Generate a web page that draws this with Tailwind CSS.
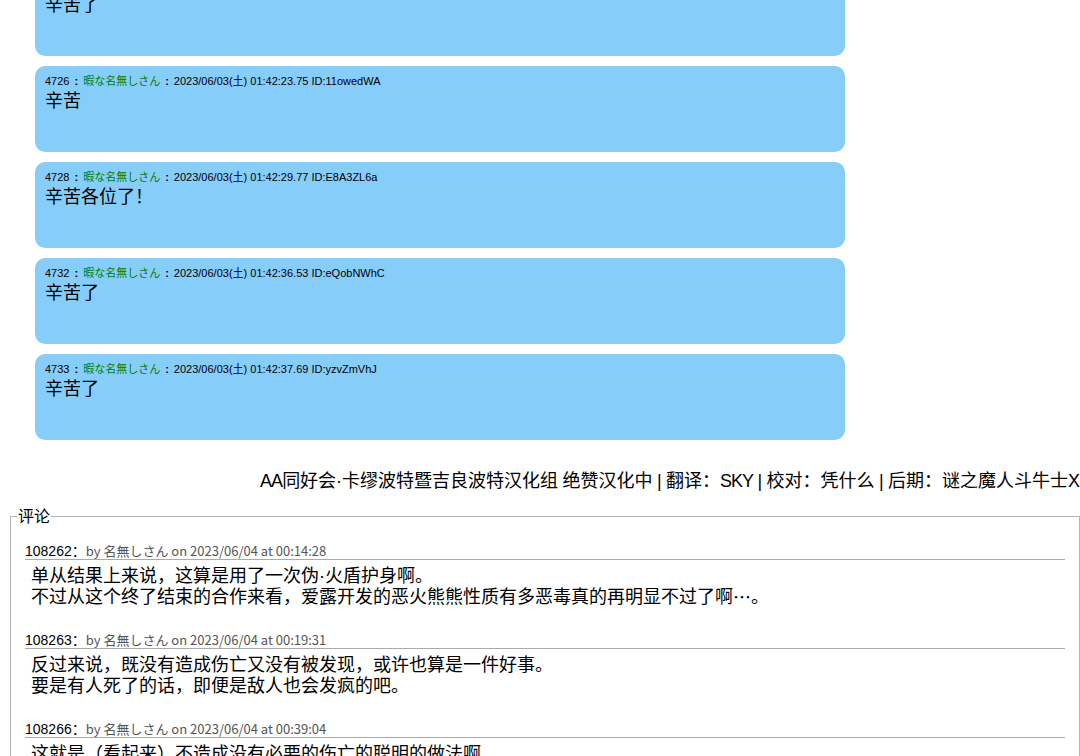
<!DOCTYPE html>
<html lang="zh">
<head>
<meta charset="utf-8">
<script src="https://cdn.jsdelivr.net/npm/@tailwindcss/browser@4"></script>
</head>
<body class="bg-white text-black overflow-hidden font-['Liberation_Sans','Noto_Sans_CJK_SC',sans-serif]">
<div class="h-[756px] overflow-hidden">
  <main class="-mt-[30px] ml-[35px] w-[810px] flex flex-col gap-[10px]">
    <article class="h-[86px] rounded-[10px] bg-[#87cdfa] px-[10px] pt-[8px]">
      <div class="h-[15px] text-[11px] leading-[15px] whitespace-nowrap font-['Liberation_Sans','Noto_Sans_CJK_JP',sans-serif]">4725<span class="mx-[5px] font-bold">:</span><span class="text-[#008000]">暇な名無しさん</span><span class="mx-[5px] font-bold">:</span>2023/06/03(土) 01:42:20.00 ID:abcdEFgh</div>
      <p class="text-[18px] leading-[24px]">辛苦了</p>
    </article>
    <article class="h-[86px] rounded-[10px] bg-[#87cdfa] px-[10px] pt-[8px]">
      <div class="h-[15px] text-[11px] leading-[15px] whitespace-nowrap font-['Liberation_Sans','Noto_Sans_CJK_JP',sans-serif]">4726<span class="mx-[5px] font-bold">:</span><span class="text-[#008000]">暇な名無しさん</span><span class="mx-[5px] font-bold">:</span>2023/06/03(土) 01:42:23.75 ID:11owedWA</div>
      <p class="text-[18px] leading-[24px]">辛苦</p>
    </article>
    <article class="h-[86px] rounded-[10px] bg-[#87cdfa] px-[10px] pt-[8px]">
      <div class="h-[15px] text-[11px] leading-[15px] whitespace-nowrap font-['Liberation_Sans','Noto_Sans_CJK_JP',sans-serif]">4728<span class="mx-[5px] font-bold">:</span><span class="text-[#008000]">暇な名無しさん</span><span class="mx-[5px] font-bold">:</span>2023/06/03(土) 01:42:29.77 ID:E8A3ZL6a</div>
      <p class="text-[18px] leading-[24px]">辛苦各位了！</p>
    </article>
    <article class="h-[86px] rounded-[10px] bg-[#87cdfa] px-[10px] pt-[8px]">
      <div class="h-[15px] text-[11px] leading-[15px] whitespace-nowrap font-['Liberation_Sans','Noto_Sans_CJK_JP',sans-serif]">4732<span class="mx-[5px] font-bold">:</span><span class="text-[#008000]">暇な名無しさん</span><span class="mx-[5px] font-bold">:</span>2023/06/03(土) 01:42:36.53 ID:eQobNWhC</div>
      <p class="text-[18px] leading-[24px]">辛苦了</p>
    </article>
    <article class="h-[86px] rounded-[10px] bg-[#87cdfa] px-[10px] pt-[8px]">
      <div class="h-[15px] text-[11px] leading-[15px] whitespace-nowrap font-['Liberation_Sans','Noto_Sans_CJK_JP',sans-serif]">4733<span class="mx-[5px] font-bold">:</span><span class="text-[#008000]">暇な名無しさん</span><span class="mx-[5px] font-bold">:</span>2023/06/03(土) 01:42:37.69 ID:yzvZmVhJ</div>
      <p class="text-[18px] leading-[24px]">辛苦了</p>
    </article>
  </main>
  <p class="mt-[28px] h-[26px] text-right text-[18px] leading-[26px] whitespace-nowrap [word-spacing:-0.6px]"><span class="tracking-[-1px]">AA</span>同好会·卡缪波特暨吉良波特汉化组 绝赞汉化中 | 翻译：<span class="tracking-[-1px]">SKY</span> | 校对：凭什么 | 后期：谜之魔人斗牛士X</p>
  <fieldset class="mt-[11px] ml-[10px] border border-[#b5b5b5] px-[14px] pb-4">
    <legend class="ml-[-8px] px-[1px] pt-[2px] text-[16px] leading-[20px]">评论</legend>
    <section class="mt-[16px] mb-[24px]">
      <h3 class="border-b border-[#aaa] text-[14px] leading-[16px] font-normal whitespace-nowrap font-['Liberation_Sans','Noto_Sans_CJK_JP',sans-serif]">108262：<span class="text-[13px] text-[#555] font-['Noto_Sans_CJK_JP',sans-serif]">by 名無しさん on 2023/06/04 at 00:14:28</span></h3>
      <p class="pl-[6px] text-[18px] leading-[21px] pt-[6px] whitespace-nowrap">单从结果上来说，这算是用了一次伪·火盾护身啊。<br>不过从这个终了结束的合作来看，爱露开发的恶火熊熊性质有多恶毒真的再明显不过了啊<span class="leading-none align-top font-['Noto_Sans_CJK_JP',sans-serif]">…</span>。</p>
    </section>
    <section class="mb-[24px]">
      <h3 class="border-b border-[#aaa] text-[14px] leading-[16px] font-normal whitespace-nowrap font-['Liberation_Sans','Noto_Sans_CJK_JP',sans-serif]">108263：<span class="text-[13px] text-[#555] font-['Noto_Sans_CJK_JP',sans-serif]">by 名無しさん on 2023/06/04 at 00:19:31</span></h3>
      <p class="pl-[6px] text-[18px] leading-[21px] pt-[6px] whitespace-nowrap">反过来说，既没有造成伤亡又没有被发现，或许也算是一件好事。<br>要是有人死了的话，即便是敌人也会发疯的吧。</p>
    </section>
    <section>
      <h3 class="border-b border-[#aaa] text-[14px] leading-[16px] font-normal whitespace-nowrap font-['Liberation_Sans','Noto_Sans_CJK_JP',sans-serif]">108266：<span class="text-[13px] text-[#555] font-['Noto_Sans_CJK_JP',sans-serif]">by 名無しさん on 2023/06/04 at 00:39:04</span></h3>
      <p class="pl-[6px] text-[18px] leading-[21px] pt-[6px] whitespace-nowrap">这就是（看起来）不造成没有必要的伤亡的聪明的做法啊</p>
    </section>
  </fieldset>
</div>
</body>
</html>
